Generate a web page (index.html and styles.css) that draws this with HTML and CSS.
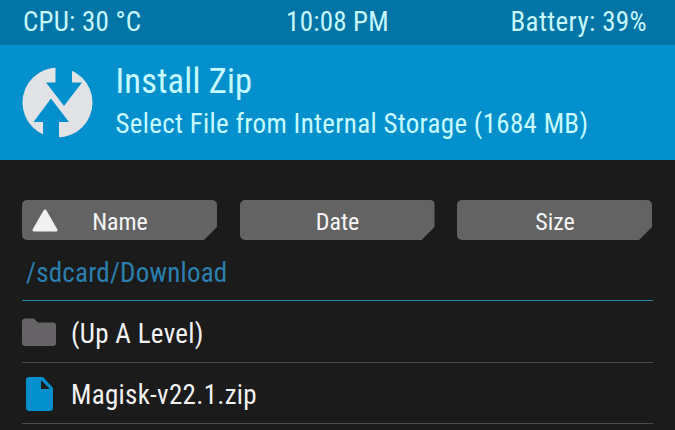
FILE: index.html
```html
<!DOCTYPE html>
<html lang="en">
<head>
<meta charset="utf-8">
<title>Install Zip</title>
<link rel="stylesheet" href="styles.css">
</head>
<body>
<div class="status">
  <span class="cpu">CPU: 30 °C</span><span class="clock">10:08 PM</span><span class="battery">Battery: 39%</span>
</div>
<header class="header">
  <svg class="logo" viewBox="0 0 72 72">
    <circle cx="35.500" cy="35.500" r="35" fill="#e2e3e4"/>
    <path fill="#0390cd" d="M33.500 0V15.500H24L42 39L60 15.500H50V0ZM29 31.500L11.500 55H21V72H37V55H47Z"/>
  </svg>
  <div class="titles">
    <h1 class="title"><span>Install Zip</span></h1>
    <p class="subtitle"><span>Select File from Internal Storage (1684 MB)</span></p>
  </div>
</header>
<main class="content">
  <div class="sorts">
    <button class="sort"><svg class="arrow" viewBox="0 0 26 23"><path d="M13 2L24 21H2Z" fill="#f1f1f1" stroke="#f1f1f1" stroke-width="3" stroke-linejoin="round"/></svg><span>Name</span></button>
    <button class="sort"><span>Date</span></button>
    <button class="sort"><span>Size</span></button>
  </div>
  <div class="path"><span>/sdcard/Download</span></div>
  <div class="row">
    <svg class="icon" viewBox="0 0 36 36"><path fill="#656366" d="M3.500 3.500H12L16 7.500H31Q34 7.500 34 10.500V28Q34 31 31 31H3Q0 31 0 28V7Q0 3.500 3.500 3.500Z"/></svg>
    <span>(Up A Level)</span>
  </div>
  <div class="row file">
    <svg class="icon" viewBox="0 0 36 36"><path fill="#0390cd" fill-rule="evenodd" d="M7 1H21L31 12V31.500Q31 35 27.500 35H7.500Q4 35 4 31.500V4Q4 1 7 1ZM19 4V13H28Z"/></svg>
    <span>Magisk-v22.1.zip</span>
  </div>
</main>
</body>
</html>
```
FILE: styles.css
```css
* { box-sizing: border-box; }
body {
  margin: 0;
  height: 430px;
  overflow: hidden;
  background: #1b1b1b;
  color: #f2f2f2;
  font: 27px/32px "Roboto Condensed", Roboto, sans-serif;
  font-stretch: 75%;
  letter-spacing: 0.3px;
}
span { white-space: nowrap; }
.status {
  display: grid;
  grid-template-columns: 1fr auto 1fr;
  height: 45px;
  padding: 6px 28px 0 23px;
  background: #0274a5;
  color: #c6f8fb;
  letter-spacing: 0.2px;
}
.clock { padding-left: 5px; }
.battery { text-align: right; letter-spacing: 0.35px; }
.header {
  display: flex;
  height: 115px;
  padding: 22px 22px 0;
  background: #0390cd;
  color: #c6fbff;
}
.logo { width: 72px; height: 72px; }
.titles { margin-left: 21.5px; }
.title { margin: -6px 0 0; font-size: 34.5px; line-height: 40px; font-weight: 400; letter-spacing: 0.2px; }
.subtitle { margin: 7px 0 0; }
.content { padding: 40px 22px 0; }
.sorts { display: grid; grid-template-columns: repeat(3, 195px); gap: 22.5px; }
.sort {
  position: relative;
  height: 40px;
  padding: 4px 0 0 1px;
  border: 0;
  border-radius: 5px;
  background: #636363;
  color: #f5f5f5;
  font: inherit;
  font-size: 24px;
  clip-path: polygon(0 0, 100% 0, 100% 27px, 182px 100%, 0 100%);
}
.arrow { position: absolute; left: 10px; top: 9px; width: 26px; height: 23px; }
.path { height: 61px; padding: 17px 0 0 4px; border-bottom: 1px solid #2f83a5; color: #2b80b0; letter-spacing: 0.2px; }
.row { display: flex; align-items: flex-start; height: 62px; padding-top: 14px; border-bottom: 1px solid #4b4b4b; }
.row.file { height: 61px; padding-top: 13px; }
.icon { width: 36px; height: 36px; margin-right: 13px; }
.row span { padding-top: 3px; }
```
